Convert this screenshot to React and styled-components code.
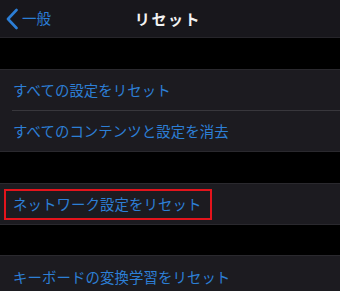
import React from "react";
import styled, { createGlobalStyle } from "styled-components";

const GlobalStyle = createGlobalStyle`
  html, body {
    margin: 0;
    padding: 0;
    background: #000;
  }
  body {
    font-family: "Noto Sans CJK JP", "Noto Sans", sans-serif;
    -webkit-font-smoothing: antialiased;
  }
`;

const Page = styled.div`
  width: 340px;
  height: 291px;
  overflow: hidden;
  background: #000;
`;

const NavBar = styled.header`
  height: 37px;
  background: #18171c;
  border-bottom: 1px solid #26252a;
  display: grid;
  grid-template-columns: 1fr auto 1fr;
  align-items: center;
`;

const Back = styled.div`
  display: flex;
  align-items: center;
  gap: 4px;
  padding-left: 6px;
  color: #2c7ed6;
  font-size: 14.5px;
  line-height: 1;
`;

const Title = styled.h1`
  margin: 0 0 0 -4px;
  color: #f2f2f2;
  font-size: 15px;
  font-weight: 700;
  letter-spacing: 1.6px;
`;

const Gap = styled.div`
  height: ${(p) => p.$h}px;
`;

const Group = styled.section`
  background: #1c1b20;
  border-top: 1px solid #2a292e;
  border-bottom: 1px solid #2a292e;
`;

const Row = styled.div`
  height: ${(p) => p.$h || 40}px;
  display: flex;
  align-items: center;
  margin-left: 12px;
  border-top: ${(p) => (p.$divider ? "1px solid #38373c" : "none")};
`;

const Label = styled.span`
  color: #2d7fd6;
  font-size: 14.4px;
  letter-spacing: 0.1px;
  padding-left: 1px;
  line-height: 1;
  white-space: nowrap;
  ${(p) =>
    p.$marked &&
    `
    margin-left: -8px;
    padding: 0 9px 0 7px;
    border: 2px solid #e3141c;
    height: 31px;
    box-sizing: border-box;
    display: flex;
    align-items: center;
  `}
`;

const Chevron = () => (
  <svg width="12" height="22" viewBox="0 0 12 22">
    <path
      d="M10.5 2 L2 11 L10.5 20"
      fill="none"
      stroke="#2c7ed6"
      strokeWidth="2.6"
      strokeLinecap="round"
      strokeLinejoin="round"
    />
  </svg>
);

export default function App() {
  return (
    <Page>
      <GlobalStyle />
      <NavBar>
        <Back>
          <Chevron />
          <span>一般</span>
        </Back>
        <Title>リセット</Title>
        <div />
      </NavBar>
      <Gap $h={31} />
      <Group>
        <Row $h={40}>
          <Label>すべての設定をリセット</Label>
        </Row>
        <Row $h={40} $divider>
          <Label>すべてのコンテンツと設定を消去</Label>
        </Row>
      </Group>
      <Gap $h={31} />
      <Group>
        <Row $h={40}>
          <Label $marked>ネットワーク設定をリセット</Label>
        </Row>
      </Group>
      <Gap $h={30} />
      <Group>
        <Row $h={42}>
          <Label>キーボードの変換学習をリセット</Label>
        </Row>
      </Group>
    </Page>
  );
}
